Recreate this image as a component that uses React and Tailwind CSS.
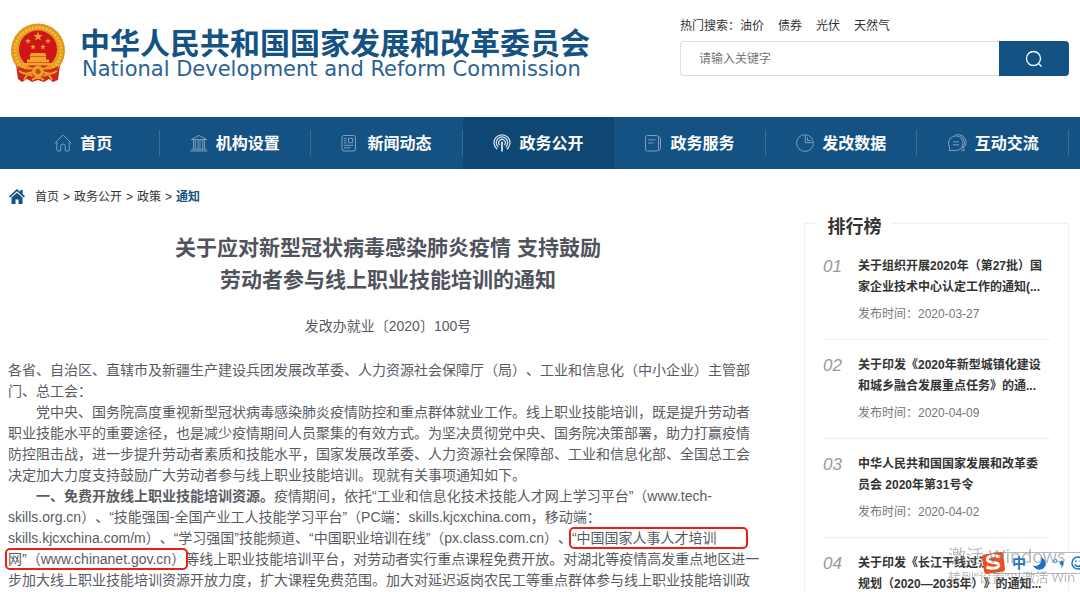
import React from 'react';

const iconProps = {
  width: 18,
  height: 18,
  viewBox: '0 0 18 18',
  fill: 'none',
  stroke: 'currentColor',
  strokeWidth: 1,
  'aria-hidden': true,
  className: 'shrink-0',
};

const HomeIcon = () => (
  <svg {...iconProps}>
    <path d="M.8 9.4 8.3 1.6a1 1 0 0 1 1.4 0l7.5 7.8M2.8 8v8c0 .6.3.9.9.9h3v-4.6a2.3 2.3 0 0 1 4.6 0v4.6h3c.6 0 .9-.3.9-.9V8" />
  </svg>
);
const BankIcon = () => (
  <svg {...iconProps}>
    <path d="M.5 17h17M1.5 15.2h15M1.2 5.6 9 1.4l7.8 4.2ZM3.5 5.8v9M5.3 5.8v9M8 5.8v9M10 5.8v9M12.7 5.8v9M14.5 5.8v9" />
  </svg>
);
const NewsIcon = () => (
  <svg {...iconProps}>
    <rect x="1" y="1.5" width="13.5" height="15.5" rx="2" />
    <path d="M7.5 4.3h4.2v4.4H7.5zM3 4.5h2.5M3 6.7h2.5M3 8.9h2.5M3 11.3h9.5M3 13.8h6.5" />
  </svg>
);
const SignalIcon = () => (
  <svg {...iconProps} strokeWidth="1.3">
    <path d="M4.2 15.2A8 8 0 1 1 13.8 15.2M5.2 12.9a5.7 5.7 0 1 1 7.6 0M6.6 11a3.3 3.3 0 1 1 4.8 0" />
    <path d="M9 8v9.4" strokeWidth="1.8" />
    <circle cx="9" cy="8.6" r="1.1" fill="currentColor" stroke="none" />
  </svg>
);
const ServiceIcon = () => (
  <svg {...iconProps}>
    <rect x="0.5" y="1.5" width="13" height="15.5" rx="2" />
    <path d="M13.5 3c1.3 0 2 .6 2 1.8v9c0 1.6-.7 2.6-2 3M3 5.8h7.5M3 9h5.5" />
  </svg>
);
const PieIcon = () => (
  <svg {...iconProps}>
    <path d="M8.5.6A8.4 8.4 0 1 0 17.4 9.5" />
    <path d="M9.3.7v8h8A8.2 8.2 0 0 0 9.3.7ZM11.5 3.4v3.2h3.3" />
  </svg>
);
const ChatIcon = () => (
  <svg {...iconProps} width="20" viewBox="0 0 20 18">
    <path d="M2.5 16.5V13A7.3 7.3 0 1 1 8.8 16.5Z" />
    <path d="M6 7.8h6M6 10.8h6M8.5 1.2C13.5-.5 19 2.7 19 8.3c0 2.4-1 4.3-2.5 5.6l.6 2.9-3.6-1M13.5 2.2c4.5 2.8 5 8.5 1.5 12" />
  </svg>
);

const navItems = [
  { label: '首页', Icon: HomeIcon },
  { label: '机构设置', Icon: BankIcon },
  { label: '新闻动态', Icon: NewsIcon },
  { label: '政务公开', Icon: SignalIcon, active: true },
  { label: '政务服务', Icon: ServiceIcon },
  { label: '发改数据', Icon: PieIcon },
  { label: '互动交流', Icon: ChatIcon },
];

const ranking = [
  { no: '01', lines: ['关于组织开展2020年（第27批）国', '家企业技术中心认定工作的通知(...'], date: '2020-03-27' },
  { no: '02', lines: ['关于印发《2020年新型城镇化建设', '和城乡融合发展重点任务》的通...'], date: '2020-04-09' },
  { no: '03', lines: ['中华人民共和国国家发展和改革委', '员会 2020年第31号令'], date: '2020-04-02' },
  { no: '04', lines: ['关于印发《长江干线过江', '规划（2020—2035年）》的通知...'] },
];

function Emblem() {
  const star = 'M0-5 1.2-1.6 4.8-1.5 1.9.6 2.9 4 0 2-2.9 4-1.9.6-4.8-1.5-1.2-1.6Z';
  return (
    <svg width="56" height="60" viewBox="0 0 56 60" role="img" aria-label="国徽" className="shrink-0">
      <path d="M6 42 50 42 48 57 43 59 39 56 34 59 28 57 22 59 17 56 12 59 8 56Z" fill="#c8281c" />
      <circle cx="28" cy="27.5" r="27" fill="#e39a1c" />
      <circle cx="28" cy="27.5" r="23" fill="none" stroke="#f3bd45" strokeWidth="3" strokeDasharray="2 1.5" />
      <circle cx="28" cy="27.5" r="25.5" fill="none" stroke="#dd9018" strokeWidth="1" strokeDasharray="2 2" />
      <circle cx="28" cy="26.5" r="19" fill="#cf1518" />
      <g fill="#f0a52a">
        <path d={star} transform="translate(28 13.5)" />
        <path d={star} transform="translate(18 18) scale(.6)" />
        <path d={star} transform="translate(38 18) scale(.6)" />
        <path d={star} transform="translate(23 24) scale(.6)" />
        <path d={star} transform="translate(33 24) scale(.6)" />
        <path d="M21 30h14l1.5 3h-17zM20 33.5h16v3h3v3H17v-3h3zM11.5 40h33l-2 2.500h-29z" />
      </g>
      <path d="M8 43c7 4 13 5 20 1 7 4 13 3 20-1l-1 6c-5 3-9 3-12 1l-3 5h-8l-3-5c-4 2-8 2-12-1Z" fill="#d92a1a" />
      <circle cx="28" cy="48.5" r="6" fill="#e9a227" />
      <circle cx="28" cy="48.5" r="2.5" fill="#d0441a" />
      <path d="M9 48c5 4 9 3 13 1M47 48c-5 4-9 3-13 1M14 57l3-5M42 57l-3-5M22 57c3-3 9-3 12 0" stroke="#eea52b" strokeWidth="1.8" fill="none" />
    </svg>
  );
}

function Header() {
  return (
    <header className="flex h-[117px] items-start justify-between pl-[10px] pr-[11px]">
      <a href="#home" className="mt-[23px] flex gap-[14px] whitespace-nowrap text-[#145284]">
        <Emblem />
        <span className="flex flex-col pt-1">
          <span className="text-[30px] font-bold leading-[34px]">中华人民共和国国家发展和改革委员会</span>
          <span className="pl-[2px] font-['DejaVu_Sans',sans-serif] text-[21px] leading-[16px] text-[#2b6291]">
            National Development and Reform Commission
          </span>
        </span>
      </a>
      <div className="w-[389px] shrink-0 pt-4">
        <div className="flex h-5 items-center gap-[14px] text-[12px] text-[#333]">
          <span>
            热门搜索：<a href="#oil">油价</a>
          </span>
          <a href="#bond">债券</a>
          <a href="#solar">光伏</a>
          <a href="#gas">天然气</a>
        </div>
        <form className="mt-[5px] flex h-[35px]" onSubmit={(e) => e.preventDefault()}>
          <input
            type="text"
            aria-label="请输入关键字"
            placeholder="请输入关键字"
            className="min-w-0 flex-1 rounded-l border border-r-0 border-[#dddddd] bg-white px-[18px] text-[12px] text-[#333] placeholder:text-[#757575]"
          />
          <button type="submit" aria-label="搜索" className="flex w-[70px] items-center justify-center rounded-r bg-[#145284] text-white">
            <svg width="18" height="18" viewBox="0 0 18 18" fill="none" stroke="currentColor" strokeWidth="1.3" aria-hidden="true">
              <circle cx="8.5" cy="8.5" r="7" />
              <path d="m13.5 13.5 3 3" />
            </svg>
          </button>
        </form>
      </div>
    </header>
  );
}

function Nav() {
  return (
    <nav className="bg-[#145284] pl-2 pr-[11px]">
      <ul className="grid grid-cols-7">
        {navItems.map(({ label, Icon, active }) => (
          <li key={label} className={active ? 'flex h-[52px] items-center bg-[#0e4674]' : 'flex h-[52px] items-center'}>
            <a
              href={'#' + label}
              className={
                active
                  ? 'flex h-[26px] flex-1 items-center justify-center gap-2 text-[#d5e0ea]'
                  : 'flex h-[26px] flex-1 items-center justify-center gap-2 border-r border-[#3b6d97] text-[#7f9fbc]'
              }
            >
              <Icon />
              <span className="pt-px text-[16px] font-bold text-white">{label}</span>
            </a>
          </li>
        ))}
      </ul>
    </nav>
  );
}

function Breadcrumb() {
  return (
    <nav aria-label="当前位置" className="flex h-[55px] items-center gap-1 pl-[9px] text-[12px] text-[#333]">
      <svg width="16" height="15" viewBox="0 0 16 15" fill="#145284" className="mr-[6px]" aria-hidden="true">
        <path d="M8 0 0 7.2l1.2 1.2L8 2.3l6.8 6.1L16 7.2l-2.3-2.1V1h-2.4v2Z" />
        <path d="M8 3.7 2.5 8.6V15h4v-4.5h3V15h4V8.6Z" />
      </svg>
      <a href="#home">首页</a>
      <span>&gt;</span>
      <a href="#open">政务公开</a>
      <span>&gt;</span>
      <a href="#policy">政策</a>
      <span>&gt;</span>
      <a href="#notice" className="font-bold text-[#145284]">通知</a>
    </nav>
  );
}

const markClass = 'rounded-xs outline-2 outline-offset-1 outline-[#ea2015]';

function Article() {
  return (
    <article className="min-w-0 flex-1 whitespace-nowrap text-[#595b64]">
      <h1 className="pt-2 text-center text-[21px] font-bold leading-8 text-[#50525c]">
        关于应对新型冠状病毒感染肺炎疫情 支持鼓励
        <br />
        劳动者参与线上职业技能培训的通知
      </h1>
      <p className="mt-[20px] text-center text-[14px] leading-[21px]">发改办就业〔2020〕100号</p>
      <div className="mt-[23px] text-[14px] leading-[21px]">
        <p>
          各省、自治区、直辖市及新疆生产建设兵团发展改革委、人力资源社会保障厅（局）、工业和信息化（中小企业）主管部
          <br />
          门、总工会：
        </p>
        <p className="indent-7">
          党中央、国务院高度重视新型冠状病毒感染肺炎疫情防控和重点群体就业工作。线上职业技能培训，既是提升劳动者
          <br />
          职业技能水平的重要途径，也是减少疫情期间人员聚集的有效方式。为坚决贯彻党中央、国务院决策部署，助力打赢疫情
          <br />
          防控阻击战，进一步提升劳动者素质和技能水平，国家发展改革委、人力资源社会保障部、工业和信息化部、全国总工会
          <br />
          决定加大力度支持鼓励广大劳动者参与线上职业技能培训。现就有关事项通知如下。
        </p>
        <p className="indent-7">
          <strong>一、免费开放线上职业技能培训资源。</strong>疫情期间，依托“工业和信息化技术技能人才网上学习平台”（www.tech-
          <br />
          skills.org.cn）、“技能强国-全国产业工人技能学习平台”（PC端：skills.kjcxchina.com，移动端：
          <br />
          skills.kjcxchina.com/m）、“学习强国”技能频道、“中国职业培训在线”（px.class.com.cn）、
          <span className={markClass + ' pr-7'}>“中国国家人事人才培训</span>
          <br />
          <span className={markClass}>网”（www.chinanet.gov.cn）</span>等线上职业技能培训平台，对劳动者实行重点课程免费开放。对湖北等疫情高发重点地区进一
          <br />
          步加大线上职业技能培训资源开放力度，扩大课程免费范围。加大对延迟返岗农民工等重点群体参与线上职业技能培训政
        </p>
      </div>
    </article>
  );
}

function Ranking() {
  return (
    <aside className="w-[265px] shrink-0 border border-[#f0f0f0] px-[18px]">
      <h2 className="-ml-[6px] -mt-[11px] w-[75px] bg-white text-center text-[18px] font-bold leading-7 text-[#333]">排行榜</h2>
      <ol>
        {ranking.map((item) => (
          <li key={item.no} className="flex gap-[16px] whitespace-nowrap border-b border-[#eeeeee] py-[15px] last:border-b-0">
            <span className="w-[19px] text-[17px] italic leading-[21px] text-[#999]">{item.no}</span>
            <div className="min-w-0">
              <a href={'#rank-' + item.no} className="block text-[12px] font-bold leading-[21px] text-[#333]">
                {item.lines[0]}
                <br />
                {item.lines[1]}
              </a>
              {item.date && <p className="mt-[6px] text-[12px] leading-5 text-[#777]">发布时间：{item.date}</p>}
            </div>
          </li>
        ))}
      </ol>
    </aside>
  );
}

function InputMethodBar() {
  return (
    <div className="fixed bottom-[18px] right-0 flex h-[22px] w-[99px] items-center gap-[7px] overflow-hidden text-[#1b74c9]">
      <span aria-hidden="true" className="absolute inset-y-0 left-3 right-0 -z-10 border-y border-[#bbbbbb] bg-white" />
      <svg width="24" height="22" viewBox="0 0 24 22" className="shrink-0" aria-hidden="true">
        <path d="M3 2.5 20 0Q22 0 22.2 2L24 17Q24 19 22 19.5L6 22Q3.5 22 3.2 20L.8 5Q.8 3 3 2.5Z" fill="#f04f1c" />
        <path d="M19 5C12 2 5.5 4.5 6.5 8.2c1 3.4 11 1.3 11.3 4.8.3 3-6.3 4.6-12.3 2" fill="none" stroke="#fff" strokeWidth="3" />
      </svg>
      <span className="text-[14px] font-bold leading-5">中</span>
      <svg width="13" height="13" viewBox="0 0 13 13" fill="currentColor" className="shrink-0" aria-hidden="true">
        <path d="M8 0c6 3 6.5 10 1 12.2C5.5 13.5 1.5 12 0 8.5 5 10.5 9.5 6 8 0Z" />
      </svg>
      <svg width="11" height="12" viewBox="0 0 11 12" fill="currentColor" className="shrink-0" aria-hidden="true">
        <circle cx="2.5" cy="4" r="1.6" fill="none" stroke="currentColor" />
        <path d="M7 5.5a1.9 1.9 0 1 1 3.5 1c0 2-1 3.5-3 4.5 1-1.2 1.3-2 1.2-3A1.9 1.9 0 0 1 7 5.5Z" />
      </svg>
      <svg width="14" height="14" viewBox="0 0 14 14" fill="none" stroke="currentColor" strokeWidth="1.5" className="shrink-0" aria-hidden="true">
        <circle cx="7" cy="7" r="6" />
        <path d="M4.8 4.5v1.5M9.2 4.5v1.5M3.8 8.5c1.5 2.5 5 2.5 6.4 0" />
      </svg>
    </div>
  );
}

function ActivationNotice() {
  return (
    <div className="pointer-events-none fixed bottom-[5px] right-0 w-[132px] overflow-hidden whitespace-nowrap font-['Noto_Sans','Noto_Sans_CJK_SC',sans-serif] text-[#777]/50">
      <p className="text-[18px] leading-[22px]">激活 Windows</p>
      <p className="text-[13px] leading-[20px]">转到“设置”以激活 Win</p>
    </div>
  );
}

export default function App() {
  return (
    <div
      className="isolate h-screen overflow-hidden bg-white font-['Liberation_Sans','Noto_Sans_CJK_SC',sans-serif] [text-spacing-trim:space-all]"
      lang="zh-CN"
    >
      <Header />
      <Nav />
      <div className="flex items-start gap-9 pr-[11px]">
        <main className="min-w-0 flex-1">
          <Breadcrumb />
          <div className="flex pl-2">
            <Article />
          </div>
        </main>
        <div className="flex pt-[54px]">
          <Ranking />
        </div>
      </div>
      <InputMethodBar />
      <ActivationNotice />
    </div>
  );
}
